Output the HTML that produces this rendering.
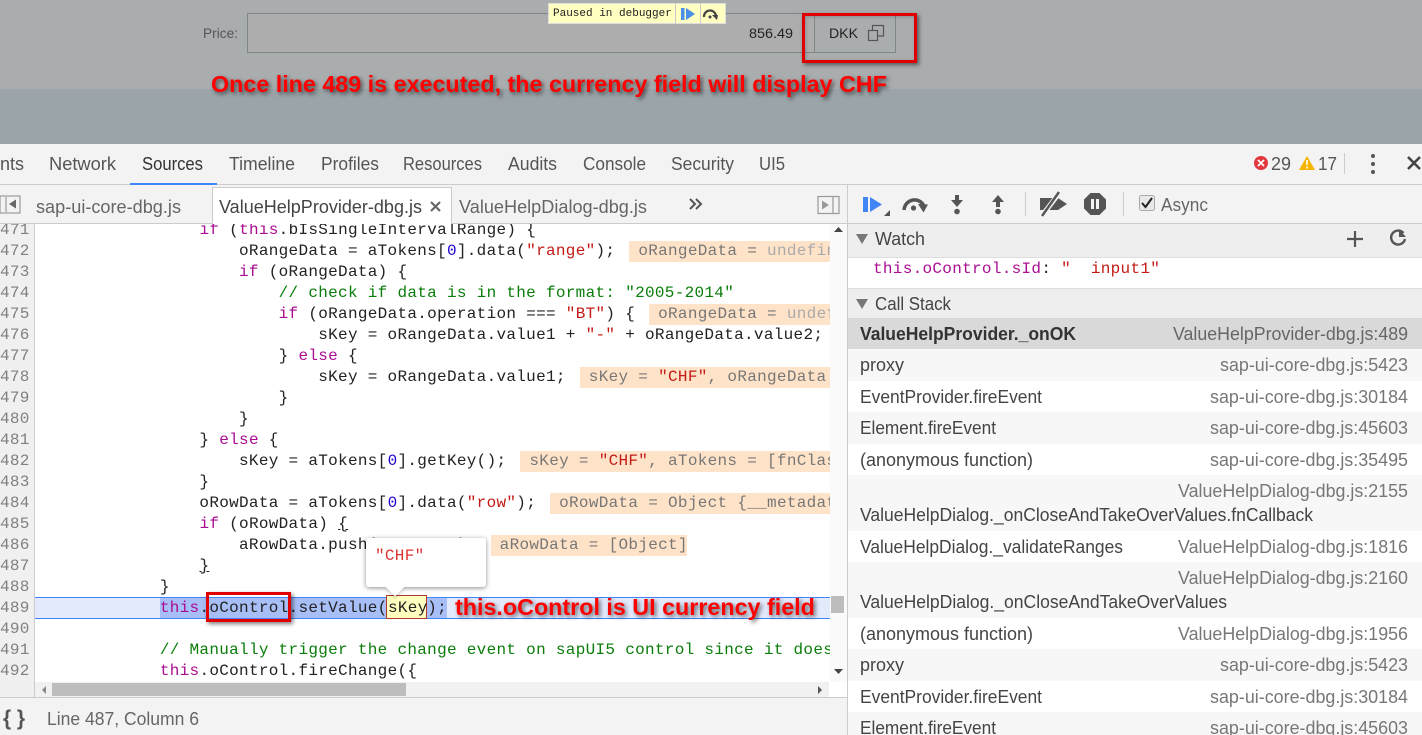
<!DOCTYPE html>
<html><head><meta charset="utf-8"><title>Debugger</title>
<style>
html,body{margin:0;padding:0;width:1422px;height:735px;overflow:hidden;background:#fff}
div,pre,svg{position:absolute;box-sizing:border-box}
svg{left:0;top:0}
svg text{font-family:"Liberation Sans",sans-serif;font-size:17px;fill:#555}
#code{left:0;top:224px;width:830px;height:458px;overflow:hidden}
pre{margin:0;font:16px/21px "Liberation Mono",monospace;letter-spacing:.3px;color:#222;white-space:pre}
#src{left:41px;top:-4px}
#nums{left:0;top:-4px;color:#808080}
.k{color:#aa0d91}.n{color:#1c00cf}.s{color:#c41a16}.c{color:#0a7d0a}
.v{display:inline-block;background:#ffe3c9;color:#777;padding:0 9px;margin-left:14px;height:21px;width:600px}
.u{color:#aaa}
.m{text-decoration:underline}
.row{left:848px;width:574px}
.red{color:#f00;font:bold 23.3px "Liberation Sans",sans-serif;text-shadow:2px 2px 4px rgba(0,0,0,.6);white-space:nowrap}
</style></head><body>
<!-- dimmed page -->
<div style="left:0;top:0;width:1422px;height:89px;background:#a9adae"></div>
<div style="left:0;top:89px;width:1422px;height:55px;background:#9ba4a9"></div>
<div style="left:247px;top:13px;width:568px;height:40px;background:#adadad;border:1px solid #808585"></div>
<div style="left:814px;top:13px;width:82px;height:40px;background:#a9adae;border:1px solid #808585"></div>
<div style="left:548px;top:3px;width:178px;height:21px;background:#ffffc2;border:1px solid #ddd"></div>
<div style="left:675px;top:3px;width:1px;height:21px;background:#ccc"></div>
<div style="left:700px;top:3px;width:1px;height:21px;background:#ccc"></div>
<div style="left:553px;top:6px;font:11px/16px 'Liberation Mono',monospace;color:#222;white-space:nowrap">Paused in debugger</div>
<div style="left:802px;top:13px;width:115px;height:50px;border:3px solid #e00000;box-shadow:2px 2px 4px rgba(0,0,0,.5),inset 1px 1px 3px rgba(0,0,0,.2)"></div>
<div class="red" style="left:211px;top:71px">Once line 489 is executed, the currency field will display CHF</div>

<!-- toolbar & tabs backgrounds -->
<div style="left:0;top:144px;width:1422px;height:41px;background:#f3f3f3;border-bottom:1px solid #ccc"></div>
<div style="left:130px;top:183px;width:87px;height:2px;background:#4285f4"></div>
<div style="left:0;top:185px;width:848px;height:39px;background:#f3f3f3;border-bottom:1px solid #ccc"></div>
<div style="left:212px;top:187px;width:240px;height:38px;background:#fff;border:1px solid #ccc;border-bottom:0"></div>
<div style="left:848px;top:185px;width:574px;height:39px;background:#f3f3f3;border-bottom:1px solid #ccc"></div>

<!-- code -->
<div style="left:0;top:224px;width:35px;height:474px;background:#f0f0f0;border-right:1px solid #ccc"></div>
<div style="left:35px;top:597px;width:795px;height:22px;background:#e3eafc;border:solid #4285f4;border-width:1px 0"></div>
<div style="left:160px;top:598px;width:287px;height:20px;background:#a8bef6"></div>
<div id="code">
<pre id="nums">471
472
473
474
475
476
477
478
479
480
481
482
483
484
485
486
487
488
489
490
491
492
493</pre>
<pre id="src">                <span class="k">if</span> (<span class="k">this</span>.bIsSingleIntervalRange) {
                    oRangeData = aTokens[<span class="n">0</span>].data(<span class="s">"range"</span>);<span class="v">oRangeData = <span class="u">undefined</span></span>
                    <span class="k">if</span> (oRangeData) {
                        <span class="c">// check if data is in the format: "2005-2014"</span>
                        <span class="k">if</span> (oRangeData.operation === <span class="s">"BT"</span>) {<span class="v">oRangeData = <span class="u">undefined</span></span>
                            sKey = oRangeData.value1 + <span class="s">"-"</span> + oRangeData.value2;
                        } <span class="k">else</span> {
                            sKey = oRangeData.value1;<span class="v">sKey = <span class="s">"CHF"</span>, oRangeData = undefined</span>
                        }
                    }
                } <span class="k">else</span> {
                    sKey = aTokens[<span class="n">0</span>].getKey();<span class="v">sKey = <span class="s">"CHF"</span>, aTokens = [fnClass]</span>
                }
                oRowData = aTokens[<span class="n">0</span>].data(<span class="s">"row"</span>);<span class="v">oRowData = Object {__metadata: Object}</span>
                <span class="k">if</span> (oRowData) <span class="m">{</span>
                    aRowData.push(oRowData);<span class="v" style="width:196px;box-sizing:border-box">aRowData = [Object]</span>
                <span class="m">}</span>
            }
            <span class="k">this</span>.oControl.setValue(sKey);

            <span class="c">// Manually trigger the change event on sapUI5 control since it does</span>
            <span class="k">this</span>.oControl.fireChange({
</pre>
</div>
<!-- sKey highlight, popover -->
<div style="left:386px;top:595px;width:41px;height:24px;background:#ffffc0;border:1px solid #b03a2e"></div>
<pre style="left:388px;top:598px;height:21px">sKey</pre>
<div style="left:366px;top:538px;width:120px;height:49px;background:#fff;border-radius:3px;box-shadow:0 1px 5px rgba(0,0,0,.45)"></div>
<div style="left:388px;top:580px;width:14px;height:14px;background:#fff;transform:rotate(45deg) scale(.95);box-shadow:2px 2px 3px rgba(0,0,0,.15)"></div>
<pre style="left:375px;top:546px;color:#d33">"CHF"</pre>
<div style="left:206px;top:592px;width:85px;height:30px;border:3px solid #e00000;box-shadow:2px 2px 4px rgba(0,0,0,.5)"></div>
<div class="red" style="left:455px;top:594px">this.oControl is UI currency field</div>

<!-- scrollbars -->
<div style="left:830px;top:224px;width:18px;height:474px;background:#fafafa"></div>
<div style="left:831px;top:596px;width:13px;height:17px;background:#bdbdbd"></div>
<div style="left:35px;top:682px;width:813px;height:16px;background:#f1f1f1"></div>
<div style="left:52px;top:683px;width:354px;height:13px;background:#bdbdbd"></div>
<div style="left:829px;top:682px;width:19px;height:16px;background:#fff"></div>

<!-- status bar -->
<div style="left:0;top:697px;width:848px;height:38px;background:#f3f3f3;border-top:1px solid #ccc"></div>

<!-- right panel -->
<div style="left:847px;top:185px;width:1px;height:550px;background:#ccc"></div>
<div class="row" style="top:224px;height:34px;background:#eee;border-bottom:1px solid #ddd"></div>
<div class="row" style="top:258px;height:31px;background:#fff;border-bottom:1px solid #ddd"></div>
<div class="row" style="top:289px;height:29px;background:#eee"></div>
<div class="row" style="top:318px;height:31px;background:#d9d9d9"></div>
<div class="row" style="top:349px;height:32px;background:#f7f7f7"></div>
<div class="row" style="top:381px;height:31px;background:#fff"></div>
<div class="row" style="top:412px;height:32px;background:#f7f7f7"></div>
<div class="row" style="top:444px;height:31px;background:#fff"></div>
<div class="row" style="top:475px;height:56px;background:#f7f7f7"></div>
<div class="row" style="top:531px;height:31px;background:#fff"></div>
<div class="row" style="top:562px;height:56px;background:#f7f7f7"></div>
<div class="row" style="top:618px;height:31px;background:#fff"></div>
<div class="row" style="top:649px;height:32px;background:#f7f7f7"></div>
<div class="row" style="top:681px;height:31px;background:#fff"></div>
<div class="row" style="top:712px;height:23px;background:#f7f7f7"></div>
<pre style="left:873px;top:259px;color:#222"><span style="color:#aa0d91">this.oControl.sId</span>: <span class="s">"  input1"</span></pre>

<svg width="1422" height="735" viewBox="0 0 1422 735">
<style>.h{fill:#555}</style>
<!-- top -->
<text x="203" y="38" textLength="35" lengthAdjust="spacingAndGlyphs" style="font-size:14px;fill:#555">Price:</text>
<text x="749" y="38" textLength="44" lengthAdjust="spacingAndGlyphs" style="font-size:14px;fill:#222">856.49</text>
<text x="829" y="38" textLength="29" lengthAdjust="spacingAndGlyphs" style="font-size:14px;fill:#222">DKK</text>
<g fill="none" stroke="#555" stroke-width="1.2"><rect x="868.5" y="30.5" width="9" height="10"/><path d="M872.5 30V25.500H883.500V36H878"/></g>
<path d="M681 8h3.500v12H681zM686 8l9 6-9 6z" fill="#4a8fe8"/>
<path d="M704 17a6 6 0 0 1 12-1" fill="none" stroke="#444" stroke-width="2.200"/><path d="M712 15l6 0-1 5z" fill="#444"/><circle cx="710" cy="17" r="1.500" fill="#444"/>

<!-- main tabs -->
<text x="0" y="170" textLength="24" lengthAdjust="spacingAndGlyphs" class="h" style="font-size:18px">nts</text>
<text x="49" y="170" textLength="67" lengthAdjust="spacingAndGlyphs" class="h" style="font-size:18px">Network</text>
<text x="142" y="170" textLength="61" lengthAdjust="spacingAndGlyphs" style="font-size:18px;fill:#333">Sources</text>
<text x="229" y="170" textLength="66" lengthAdjust="spacingAndGlyphs" class="h" style="font-size:18px">Timeline</text>
<text x="321" y="170" textLength="58" lengthAdjust="spacingAndGlyphs" class="h" style="font-size:18px">Profiles</text>
<text x="403" y="170" textLength="79" lengthAdjust="spacingAndGlyphs" class="h" style="font-size:18px">Resources</text>
<text x="508" y="170" textLength="49" lengthAdjust="spacingAndGlyphs" class="h" style="font-size:18px">Audits</text>
<text x="583" y="170" textLength="63" lengthAdjust="spacingAndGlyphs" class="h" style="font-size:18px">Console</text>
<text x="671" y="170" textLength="63" lengthAdjust="spacingAndGlyphs" class="h" style="font-size:18px">Security</text>
<text x="759" y="170" textLength="26" lengthAdjust="spacingAndGlyphs" class="h" style="font-size:18px">UI5</text>
<!-- error / warning -->
<circle cx="1261" cy="163" r="7" fill="#e0383e"/><path d="M1258 160l6 6M1264 160l-6 6" stroke="#fff" stroke-width="1.800"/>
<text x="1271" y="170" textLength="20" lengthAdjust="spacingAndGlyphs" style="font-size:18px">29</text>
<path d="M1307 156l8 14h-16z" fill="#f4b400"/><path d="M1307 160v5M1307 166.500v2" stroke="#fff" stroke-width="1.600"/>
<text x="1318" y="170" textLength="19" lengthAdjust="spacingAndGlyphs" style="font-size:18px">17</text>
<rect x="1344" y="153" width="1" height="21" fill="#ccc"/>
<g fill="#555"><circle cx="1373" cy="156" r="2"/><circle cx="1373" cy="164" r="2"/><circle cx="1373" cy="172" r="2"/></g>
<path d="M1408 157l12 12M1420 157l-12 12" stroke="#444" stroke-width="2.600"/>

<!-- file tabs -->
<rect x="0" y="196" width="20" height="17" fill="#f3f3f3" stroke="#888"/><path d="M6 197v15" stroke="#888"/><path d="M16 199.500v9l-7-4.500z" fill="#666"/>
<text x="36" y="213" textLength="145" lengthAdjust="spacingAndGlyphs" style="font-size:18px;fill:#666">sap-ui-core-dbg.js</text>
<text x="219" y="213" textLength="203" lengthAdjust="spacingAndGlyphs" style="font-size:18px;fill:#444">ValueHelpProvider-dbg.js</text>
<path d="M431 202l9 9M440 202l-9 9" stroke="#666" stroke-width="2.200"/>
<text x="459" y="213" textLength="188" lengthAdjust="spacingAndGlyphs" style="font-size:18px;fill:#666">ValueHelpDialog-dbg.js</text>
<path d="M690 199l5 5-5 5M696 199l5 5-5 5" fill="none" stroke="#555" stroke-width="2"/>
<rect x="818" y="196.500" width="21" height="17" fill="none" stroke="#999" stroke-width="1.200"/><path d="M833 197v16" stroke="#999" stroke-width="1.200"/><path d="M822 200.500v9l7-4.500z" fill="#999"/>

<!-- debugger toolbar -->
<path d="M863 197h5v15h-5zM870 197l12 7.500-12 7.500z" fill="#4285f4"/>
<path d="M884 216h6v-6z" fill="#555"/>
<path d="M904 210C905 199 919 196 924 206" fill="none" stroke="#555" stroke-width="3.500"/><path d="M918 204l10 .5-4.500 8z" fill="#555"/><circle cx="913.500" cy="208" r="2.600" fill="#555"/>
<path d="M955 195h4v5h4l-6 7-6-7h4z" fill="#555"/><circle cx="957" cy="211.500" r="2.800" fill="#555"/>
<path d="M996 207h4v-5h4l-6-7-6 7h4z" fill="#555"/><circle cx="998" cy="211.500" r="2.800" fill="#555"/>
<rect x="1025" y="192" width="1" height="24" fill="#ccc"/>
<path d="M1040 198h18l9 6-9 6h-18z" fill="#555"/><path d="M1041 217l19-25" stroke="#f3f3f3" stroke-width="5"/><path d="M1042 216l17-24" stroke="#555" stroke-width="2.400"/>
<path d="M1090.500 193h9l6.500 6.500v9l-6.500 6.500h-9l-6.500-6.500v-9z" fill="#555"/><rect x="1091" y="199" width="3" height="10" fill="#f3f3f3"/><rect x="1096" y="199" width="3" height="10" fill="#f3f3f3"/>
<rect x="1123" y="192" width="1" height="24" fill="#ccc"/>
<rect x="1139.500" y="195.500" width="15" height="15" rx="2" fill="#e8e8e8" stroke="#aaa"/><path d="M1142 203l3.500 4 6.500-9" fill="none" stroke="#222" stroke-width="2"/>
<text x="1161" y="211" textLength="47" lengthAdjust="spacingAndGlyphs" style="font-size:18px;fill:#666">Async</text>

<!-- panes -->
<path d="M856 234h12l-6 10z" fill="#777"/>
<text x="875" y="245" textLength="50" lengthAdjust="spacingAndGlyphs" style="font-size:18px;fill:#444">Watch</text>
<path d="M1355 231v16M1347 239h16" stroke="#555" stroke-width="2.200"/>
<path d="M1403.500 233a7 7 0 1 0 1.500 6" fill="none" stroke="#555" stroke-width="2.400"/><path d="M1399 229v8h7z" fill="#555"/>
<path d="M856 299h12l-6 10z" fill="#777"/>
<text x="875" y="310" textLength="76" lengthAdjust="spacingAndGlyphs" style="font-size:18px;fill:#444">Call Stack</text>

<!-- call stack -->
<text x="860" y="340" textLength="216" lengthAdjust="spacingAndGlyphs" style="font-size:18px;font-weight:bold;fill:#333">ValueHelpProvider._onOK</text>
<text x="1173" y="340" textLength="235" lengthAdjust="spacingAndGlyphs" style="font-size:18px;fill:#666">ValueHelpProvider-dbg.js:489</text>
<text x="860" y="371" textLength="44" lengthAdjust="spacingAndGlyphs" style="font-size:18px;fill:#444">proxy</text>
<text x="860" y="403" textLength="182" lengthAdjust="spacingAndGlyphs" style="font-size:18px;fill:#444">EventProvider.fireEvent</text>
<text x="860" y="434" textLength="136" lengthAdjust="spacingAndGlyphs" style="font-size:18px;fill:#444">Element.fireEvent</text>
<text x="860" y="466" textLength="173" lengthAdjust="spacingAndGlyphs" style="font-size:18px;fill:#444">(anonymous function)</text>
<text x="860" y="521" textLength="453" lengthAdjust="spacingAndGlyphs" style="font-size:18px;fill:#444">ValueHelpDialog._onCloseAndTakeOverValues.fnCallback</text>
<text x="860" y="553" textLength="263" lengthAdjust="spacingAndGlyphs" style="font-size:18px;fill:#444">ValueHelpDialog._validateRanges</text>
<text x="860" y="608" textLength="367" lengthAdjust="spacingAndGlyphs" style="font-size:18px;fill:#444">ValueHelpDialog._onCloseAndTakeOverValues</text>
<text x="860" y="640" textLength="173" lengthAdjust="spacingAndGlyphs" style="font-size:18px;fill:#444">(anonymous function)</text>
<text x="860" y="671" textLength="44" lengthAdjust="spacingAndGlyphs" style="font-size:18px;fill:#444">proxy</text>
<text x="860" y="703" textLength="182" lengthAdjust="spacingAndGlyphs" style="font-size:18px;fill:#444">EventProvider.fireEvent</text>
<text x="860" y="734" textLength="136" lengthAdjust="spacingAndGlyphs" style="font-size:18px;fill:#444">Element.fireEvent</text>
<text x="1220" y="371" textLength="188" lengthAdjust="spacingAndGlyphs" style="font-size:18px;fill:#777">sap-ui-core-dbg.js:5423</text>
<text x="1210" y="403" textLength="198" lengthAdjust="spacingAndGlyphs" style="font-size:18px;fill:#777">sap-ui-core-dbg.js:30184</text>
<text x="1210" y="434" textLength="198" lengthAdjust="spacingAndGlyphs" style="font-size:18px;fill:#777">sap-ui-core-dbg.js:45603</text>
<text x="1210" y="466" textLength="198" lengthAdjust="spacingAndGlyphs" style="font-size:18px;fill:#777">sap-ui-core-dbg.js:35495</text>
<text x="1178" y="497" textLength="230" lengthAdjust="spacingAndGlyphs" style="font-size:18px;fill:#777">ValueHelpDialog-dbg.js:2155</text>
<text x="1178" y="553" textLength="230" lengthAdjust="spacingAndGlyphs" style="font-size:18px;fill:#777">ValueHelpDialog-dbg.js:1816</text>
<text x="1178" y="584" textLength="230" lengthAdjust="spacingAndGlyphs" style="font-size:18px;fill:#777">ValueHelpDialog-dbg.js:2160</text>
<text x="1178" y="640" textLength="230" lengthAdjust="spacingAndGlyphs" style="font-size:18px;fill:#777">ValueHelpDialog-dbg.js:1956</text>
<text x="1220" y="671" textLength="188" lengthAdjust="spacingAndGlyphs" style="font-size:18px;fill:#777">sap-ui-core-dbg.js:5423</text>
<text x="1210" y="703" textLength="198" lengthAdjust="spacingAndGlyphs" style="font-size:18px;fill:#777">sap-ui-core-dbg.js:30184</text>
<text x="1210" y="734" textLength="198" lengthAdjust="spacingAndGlyphs" style="font-size:18px;fill:#777">sap-ui-core-dbg.js:45603</text>

<!-- scroll arrows -->
<path d="M834 232h9l-4.500-5z" fill="#444"/><path d="M834 669h9l-4.500 5z" fill="#444"/>
<path d="M46 686v8l-4-4z" fill="#888"/><path d="M818 686v8l4-4z" fill="#555"/>

<!-- status -->
<text x="3" y="725" style="font-size:21px;font-weight:bold;fill:#555" textLength="22" lengthAdjust="spacing">{}</text>
<text x="47" y="725" textLength="152" lengthAdjust="spacingAndGlyphs" style="font-size:18px;fill:#666">Line 487, Column 6</text>
</svg>
</body></html>
